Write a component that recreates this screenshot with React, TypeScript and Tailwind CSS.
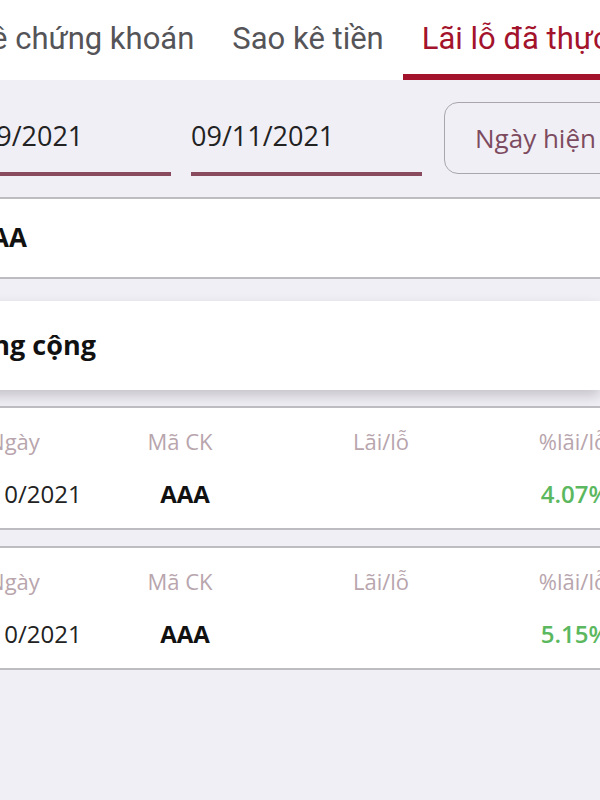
const tabs = [
  { label: 'Sao kê chứng khoán', active: false },
  { label: 'Sao kê tiền', active: false },
  { label: 'Lãi lỗ đã thực hiện', active: true },
];

const rows = [
  { date: '10/10/2021', code: 'AAA', pnl: '', pct: '4.07%' },
  { date: '20/10/2021', code: 'AAA', pnl: '', pct: '5.15%' },
];

const App = () => {
  return (
    <div className="w-[600px] h-[800px] overflow-hidden bg-[#f1eff6] font-['Open_Sans',sans-serif]">
      {/* tabs */}
      <div className="h-[80px] bg-white flex items-stretch -ml-[104px] whitespace-nowrap font-['Roboto',sans-serif] text-[31px]">
        {tabs.map((t) => (
          <div
            key={t.label}
            className={`shrink-0 flex items-center px-[19px] pt-[5px] border-b-[6px] ${
              t.active ? 'text-[#a3132c] border-[#a3132c]' : 'text-[#555458] border-transparent'
            }`}
          >
            {t.label}
          </div>
        ))}
      </div>

      {/* date filter */}
      <div className="flex gap-[20px] pt-[21px] -ml-[60px] whitespace-nowrap">
        <div className="shrink-0 w-[231px] h-[75px] flex items-center border-b-4 border-[#8a4a5e] text-[27px] text-[#222]">
          09/09/2021
        </div>
        <div className="shrink-0 w-[231px] h-[75px] flex items-center border-b-4 border-[#8a4a5e] text-[27px] text-[#222]">
          09/11/2021
        </div>
        <div className="shrink-0 ml-[2px] mt-[1px] w-[240px] h-[72px] flex items-center px-[30px] border-[1.5px] border-[#a9a7ad] rounded-[14px] text-[26px] text-[#7d4b5f]">
          Ngày hiện tại
        </div>
      </div>

      {/* search */}
      <div className="mt-[21px] h-[82px] bg-white border-y-2 border-[#bdbcc1] flex items-center -ml-[27px] text-[26px] font-bold text-[#111] pb-[2px]">
        AAA
      </div>

      {/* total */}
      <div className="mt-[22px] h-[89px] bg-white shadow-[0_6px_12px_rgba(0,0,0,0.18)] flex items-center -ml-[40px] text-[27px] font-bold text-[#111] pb-[1px] whitespace-nowrap">
        Tổng cộng
      </div>

      {/* records */}
      <div className="mt-[16px] flex flex-col gap-[16px]">
        {rows.map((r, i) => (
          <div key={i} className="h-[124px] bg-white border-y-2 border-[#bdbcc1] flex flex-col">
            <div className="grid grid-cols-[200px_132px_270px_114px] -ml-[86px] pt-[17px] text-[22px] text-[#b8a5ad] text-center whitespace-nowrap">
              <span>Ngày</span>
              <span>Mã CK</span>
              <span>Lãi/lỗ</span>
              <span>%lãi/lỗ</span>
            </div>
            <div className="grid grid-cols-[200px_132px_270px_114px] -ml-[86px] pt-[18px] text-center whitespace-nowrap items-center">
              <span className="text-[24px] text-[#222] pl-[8px]">{r.date}</span>
              <span className="text-[24px] font-bold text-[#111] pl-[10px]">{r.code}</span>
              <span className="text-[22px] text-[#222]">{r.pnl}</span>
              <span className="text-[24px] font-semibold text-[#5cb85f] pl-[4px]">{r.pct}</span>
            </div>
          </div>
        ))}
      </div>
    </div>
  );
};

export default App;
